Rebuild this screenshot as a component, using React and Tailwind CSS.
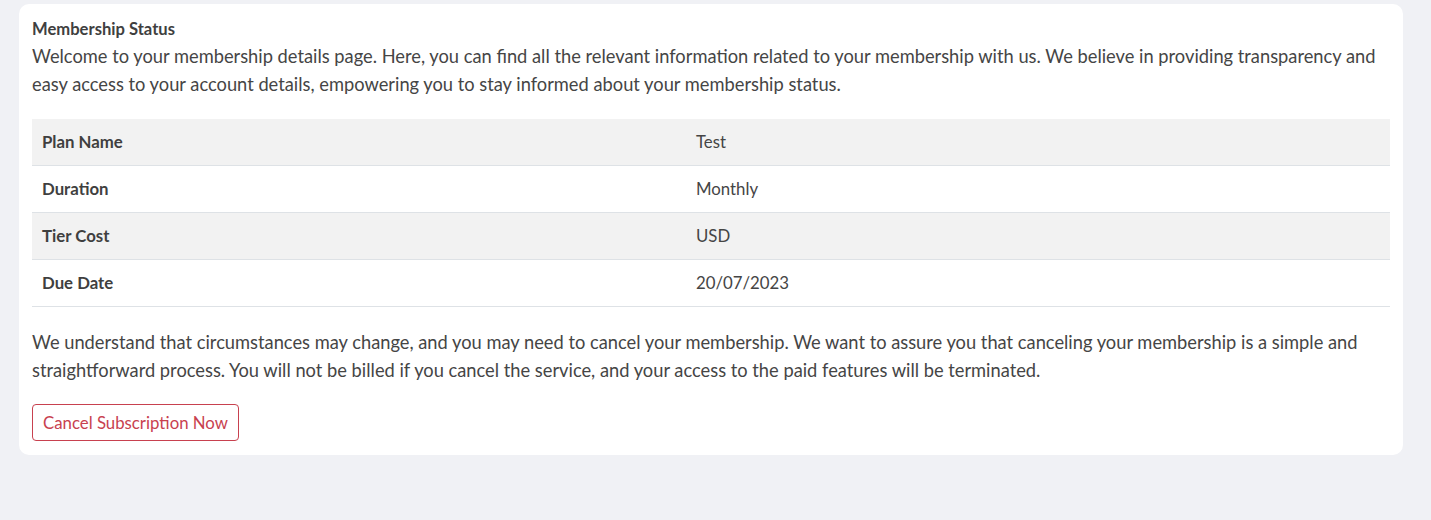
import React from "react";

const rows = [
  ["Plan Name", "Test"],
  ["Duration", "Monthly"],
  ["Tier Cost", "USD"],
  ["Due Date", "20/07/2023"],
];

export default function App() {
  return (
    <div className="min-h-[520px] w-full bg-[#f0f1f5] pt-[4px] pl-[19px] pr-[28px] text-[#454545]" style={{ fontFamily: "Lato, 'Noto Sans', sans-serif" }}>
      <div className="w-[1384px] rounded-[10px] bg-white px-[13px] pt-[13px] pb-[14px]">
        <h1 className="text-[16.6px] font-bold leading-[24px] text-[#3f3f3f]">Membership Status</h1>
        <p className="pt-[1px] text-[18.3px] leading-[28px]">
          Welcome to your membership details page. Here, you can find all the relevant information related to your membership with us. We believe in providing transparency and easy access to your account details, empowering you to stay informed about your membership status.
        </p>
        <div className="mt-[21px] border-b border-[#dee2e6]">
          {rows.map(([k, v], i) => (
            <div key={k} className={`flex items-center text-[16.8px] ${i > 0 ? "h-[47px] border-t border-[#dee2e6]" : "h-[46px]"} ${i % 2 === 0 ? "bg-[#f2f2f2]" : "bg-white"}`}>
              <div className="w-[654px] pl-[10px] font-bold text-[#3f3f3f]">{k}</div>
              <div className="pl-[10px]">{v}</div>
            </div>
          ))}
        </div>
        <p className="mt-[21px] text-[18.3px] leading-[28px]">
          We understand that circumstances may change, and you may need to cancel your membership. We want to assure you that canceling your membership is a simple and straightforward process. You will not be billed if you cancel the service, and your access to the paid features will be terminated.
        </p>
        <button className="mt-[20px] h-[37px] rounded-[4px] border border-[#c8414f] px-[10px] text-[16.8px] text-[#c8414f]">
          Cancel Subscription Now
        </button>
      </div>
    </div>
  );
}
